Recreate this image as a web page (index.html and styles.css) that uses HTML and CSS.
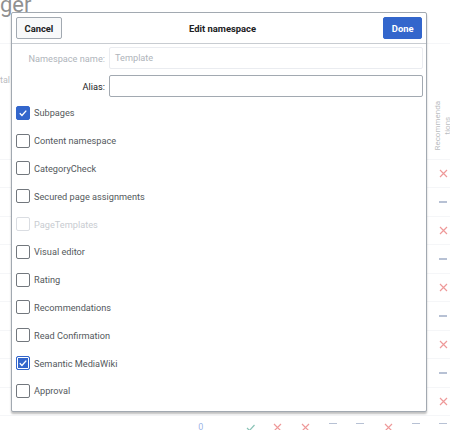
FILE: index.html
```html
<!DOCTYPE html>
<html>
<head>
<meta charset="utf-8">
<link rel="stylesheet" href="styles.css">
</head>
<body>
<div class="page">
  <div class="page-title">ger</div>
  <div class="table">
    <div class="row head">
      <div class="lead">tal</div>
      <div class="cells"><div class="cell rot"><span>Recommenda<br>tions</span></div></div>
    </div>
    <div class="row"><div class="lead"></div><div class="cells"><div class="cell"><svg class="ic-x" viewBox="0 0 9 9"><path d="M1 1L8 8M8 1L1 8"/></svg></div></div></div>
    <div class="row"><div class="lead"></div><div class="cells"><div class="cell"><span class="dash"></span></div></div></div>
    <div class="row"><div class="lead"></div><div class="cells"><div class="cell"><svg class="ic-x" viewBox="0 0 9 9"><path d="M1 1L8 8M8 1L1 8"/></svg></div></div></div>
    <div class="row"><div class="lead"></div><div class="cells"><div class="cell"><span class="dash"></span></div></div></div>
    <div class="row"><div class="lead"></div><div class="cells"><div class="cell"><svg class="ic-x" viewBox="0 0 9 9"><path d="M1 1L8 8M8 1L1 8"/></svg></div></div></div>
    <div class="row"><div class="lead"></div><div class="cells"><div class="cell"><span class="dash"></span></div></div></div>
    <div class="row"><div class="lead"></div><div class="cells"><div class="cell"><svg class="ic-x" viewBox="0 0 9 9"><path d="M1 1L8 8M8 1L1 8"/></svg></div></div></div>
    <div class="row"><div class="lead"></div><div class="cells"><div class="cell"><span class="dash"></span></div></div></div>
    <div class="row"><div class="lead"></div><div class="cells"><div class="cell"><svg class="ic-x" viewBox="0 0 9 9"><path d="M1 1L8 8M8 1L1 8"/></svg></div></div></div>
    <div class="row last">
      <div class="lead"></div>
      <div class="cells">
        <div class="cell num">0</div>
        <div class="cell"><svg class="ic-ok" viewBox="0 0 9 9"><path d="M1 5L3.5 7.5L8.5 2"/></svg></div>
        <div class="cell"><svg class="ic-x" viewBox="0 0 9 9"><path d="M1 1L8 8M8 1L1 8"/></svg></div>
        <div class="cell"><svg class="ic-x" viewBox="0 0 9 9"><path d="M1 1L8 8M8 1L1 8"/></svg></div>
        <div class="cell"><span class="dash"></span></div>
        <div class="cell"><span class="dash"></span></div>
        <div class="cell"><svg class="ic-x" viewBox="0 0 9 9"><path d="M1 1L8 8M8 1L1 8"/></svg></div>
        <div class="cell"><span class="dash"></span></div>
        <div class="cell"><span class="dash"></span></div>
      </div>
    </div>
  </div>
</div>
<div class="veil"></div>
<div class="dialog">
  <div class="dlg-head">
    <button class="btn">Cancel</button>
    <div class="dlg-title">Edit namespace</div>
    <button class="btn primary">Done</button>
  </div>
  <div class="dlg-body">
    <div class="fields">
      <label class="flabel disabled">Namespace name:</label>
      <div class="input disabled">Template</div>
      <label class="flabel">Alias:</label>
      <div class="input"></div>
    </div>
    <ul class="checks">
      <li class="check on"><span class="box"><svg viewBox="0 0 14 14"><path d="M3.2 7.3L5.8 9.9L10.8 4.2"/></svg></span><span>Subpages</span></li>
      <li class="check"><span class="box"></span><span>Content namespace</span></li>
      <li class="check"><span class="box"></span><span>CategoryCheck</span></li>
      <li class="check"><span class="box"></span><span>Secured page assignments</span></li>
      <li class="check disabled"><span class="box"></span><span>PageTemplates</span></li>
      <li class="check"><span class="box"></span><span>Visual editor</span></li>
      <li class="check"><span class="box"></span><span>Rating</span></li>
      <li class="check"><span class="box"></span><span>Recommendations</span></li>
      <li class="check"><span class="box"></span><span>Read Confirmation</span></li>
      <li class="check on focus"><span class="box"><svg viewBox="0 0 14 14"><path d="M3.2 7.3L5.8 9.9L10.8 4.2"/></svg></span><span>Semantic MediaWiki</span></li>
      <li class="check"><span class="box"></span><span>Approval</span></li>
    </ul>
  </div>
</div>
</body>
</html>
```
FILE: styles.css
```css
html, body {
  margin: 0;
  padding: 0;
  overflow: hidden;
}
body {
  width: 450px;
  height: 430px;
  position: relative;
  background: #fff;
  color: #202122;
  font-family: Roboto, "Liberation Sans", Arial, sans-serif;
}

/* background page */
.page {
  width: 457px;
}
.page-title {
  height: 43px;
  font-size: 22px;
  line-height: 10px;
  color: #202122;
}
.row {
  display: flex;
  justify-content: space-between;
  box-sizing: border-box;
  height: 28.44px;
  border-top: 1px solid #eaecf0;
}
.row.head {
  height: 116px;
}
.row.last .cells {
  align-items: flex-start;
}
.row.last .cell {
  padding-top: 7px;
  box-sizing: border-box;
  align-items: flex-start;
}
.lead {
  font-size: 9px;
  color: #72777d;
  padding-top: 31px;
}
.cells {
  display: flex;
  height: 100%;
}
.cell {
  width: 27.6px;
  display: flex;
  align-items: center;
  justify-content: center;
}
.cell.num {
  width: 41px;
  justify-content: flex-start;
  box-sizing: border-box;
  padding-left: 3px;
  font-size: 9px;
  line-height: 9px;
  color: #36c;
}
.cell.rot {
  align-items: flex-end;
  box-sizing: border-box;
  padding-bottom: 9px;
}
.cell.rot span {
  writing-mode: vertical-rl;
  transform: rotate(180deg);
  font-size: 8px;
  line-height: 9.5px;
  text-align: center;
  color: #72777d;
  margin-right: 1px;
}
.ic-x, .ic-ok {
  width: 9px;
  height: 9px;
  fill: none;
  stroke-width: 1.2;
}
.ic-x { stroke: #d33; }
.ic-ok { stroke: #14866d; }
.dash {
  width: 8px;
  height: 1.5px;
  background: #6f82a8;
}
.veil {
  position: absolute;
  inset: 0;
  background: rgba(255, 255, 255, 0.5);
}

/* dialog */
.dialog {
  position: absolute;
  left: 11px;
  top: 12px;
  width: 416px;
  height: 400px;
  box-sizing: border-box;
  background: #fff;
  border: 1px solid #a2a9b1;
  border-radius: 2px;
  box-shadow: 0 2px 2px 0 rgba(0, 0, 0, 0.25);
}
.dlg-head {
  display: flex;
  align-items: center;
  box-sizing: border-box;
  height: 31px;
  padding: 0 4px;
  border-bottom: 1px solid #c8ccd1;
}
.btn {
  height: 22px;
  box-sizing: border-box;
  padding: 0 7.5px;
  border: 1px solid #a2a9b1;
  border-radius: 2px;
  background: #f8f9fa;
  color: #202122;
  font-family: inherit;
  font-size: 9.4px;
  font-weight: bold;
}
.btn.primary {
  background: #36c;
  border-color: #36c;
  color: #fff;
}
.dlg-title {
  flex: 1;
  text-align: center;
  font-size: 9.4px;
  font-weight: bold;
}
.dlg-body {
  padding: 3px 3px 0 4px;
}
.fields {
  display: grid;
  grid-template-columns: 89px 1fr;
  column-gap: 4px;
  row-gap: 6px;
}
.flabel {
  align-self: center;
  text-align: right;
  font-size: 9.2px;
  color: #202122;
}
.flabel.disabled { color: #b0b5bb; }
.input {
  height: 22px;
  box-sizing: border-box;
  border: 1px solid #a2a9b1;
  border-radius: 2px;
  padding: 0 5px;
  font-size: 9.2px;
  line-height: 20px;
}
.input.disabled {
  border-color: #eaecf0;
  color: #b0b5bb;
}
.checks {
  list-style: none;
  margin: 2px 0 0;
  padding: 0;
}
.check {
  display: flex;
  align-items: center;
  gap: 4px;
  height: 27.8px;
  font-size: 9.2px;
  color: #54595d;
}
.box {
  width: 14px;
  height: 14px;
  box-sizing: border-box;
  border: 1px solid #72777d;
  border-radius: 2px;
  background: #fff;
  display: flex;
}
.box svg {
  width: 12px;
  height: 12px;
  fill: none;
  stroke: #fff;
  stroke-width: 1.6;
}
.check.on .box {
  background: #36c;
  border-color: #36c;
}
.check.focus .box {
  box-shadow: inset 0 0 0 1px #fff;
}
.check.disabled { color: #c8ccd1; }
.check.disabled .box { border-color: #dadde2; }
```
